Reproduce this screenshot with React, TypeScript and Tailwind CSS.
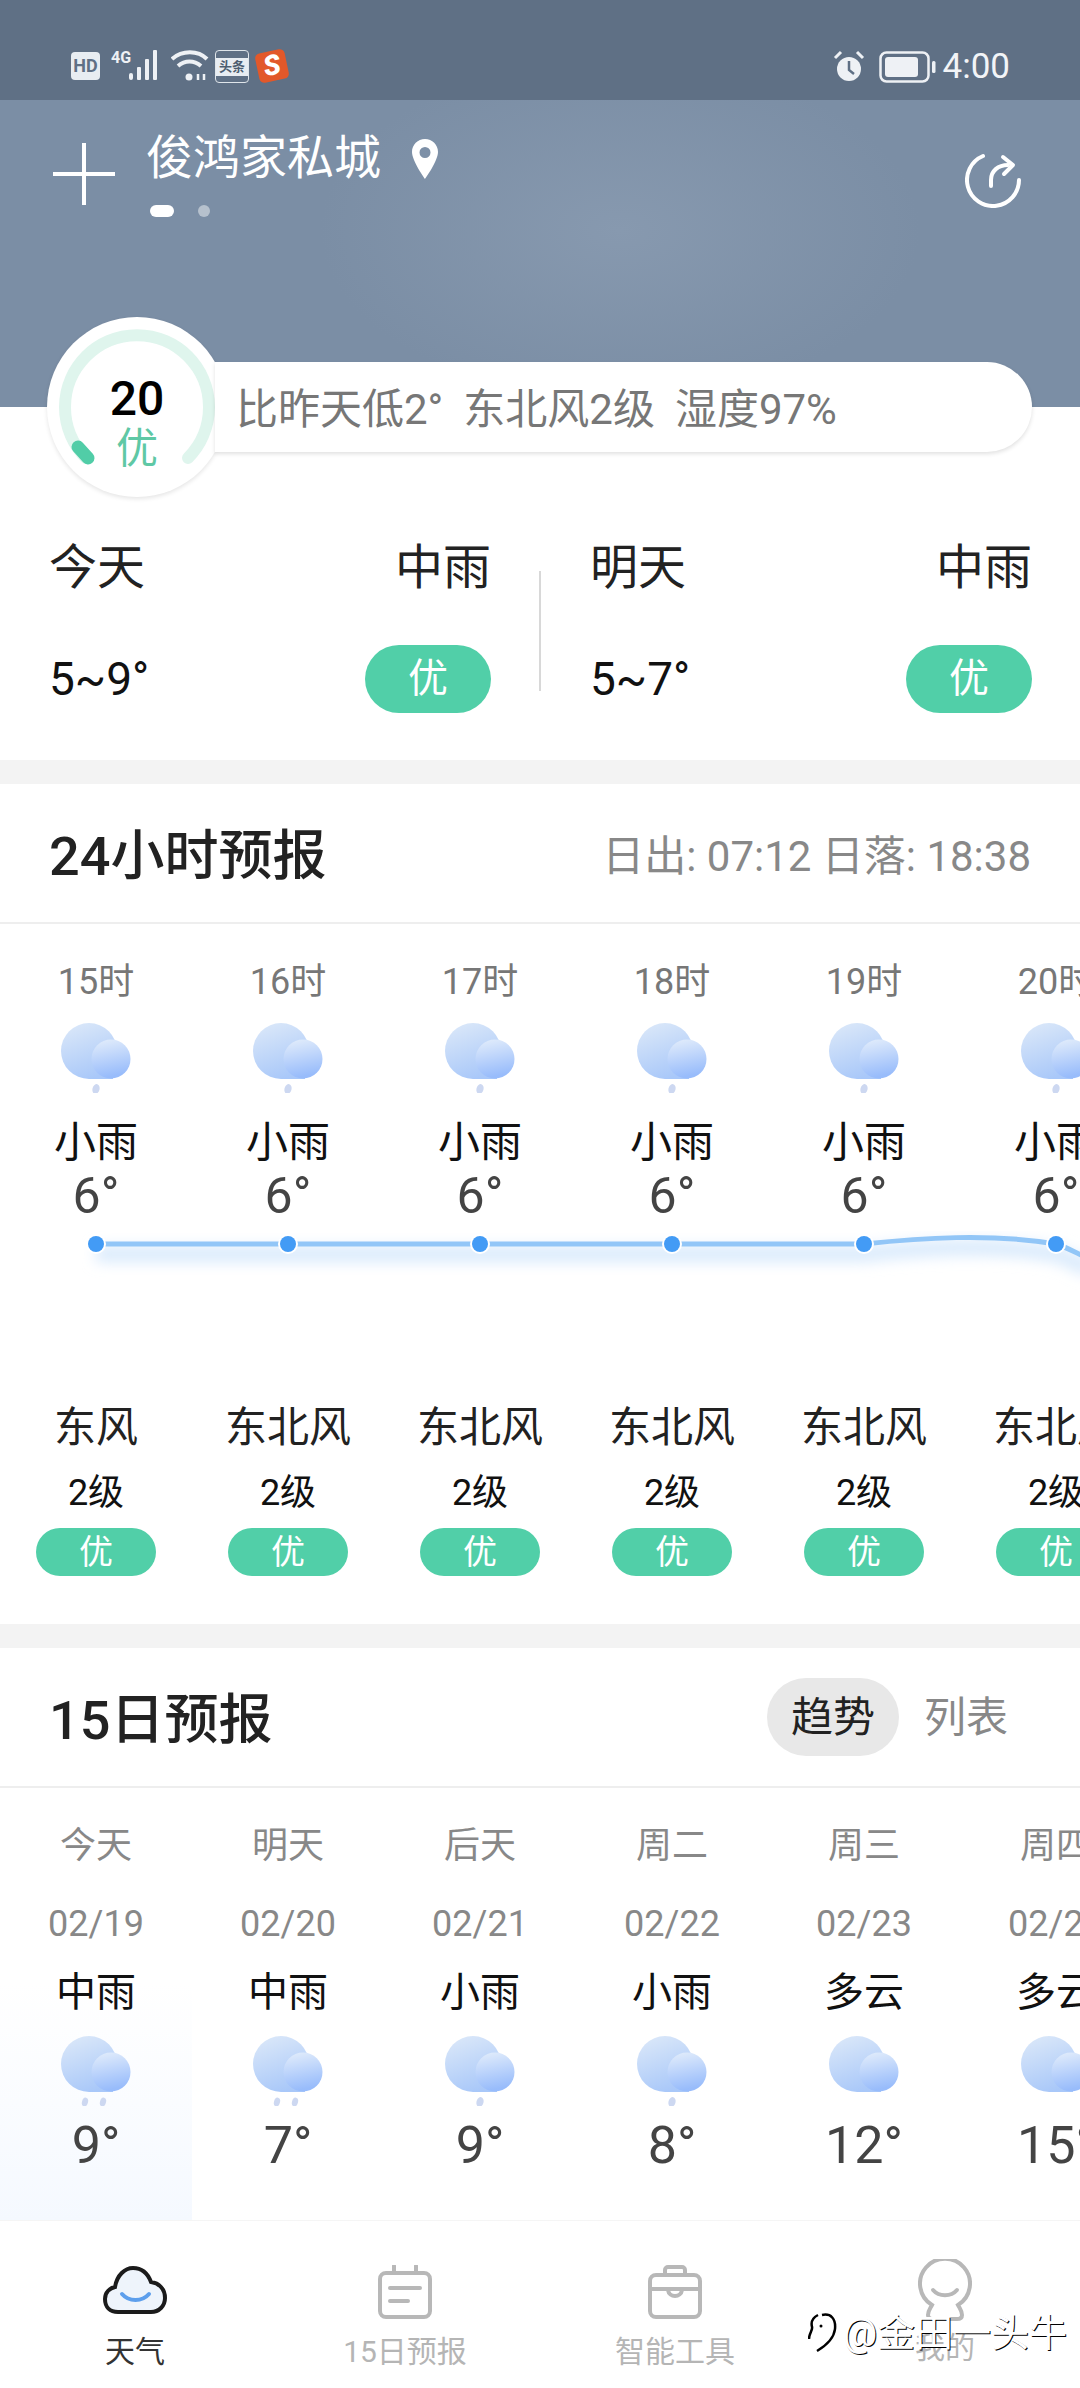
const hours = ["15时", "16时", "17时", "18时", "19时", "20时"];
const days = [
  { week: "今天", date: "02/19", cond: "中雨", temp: 9, drops: 2 },
  { week: "明天", date: "02/20", cond: "中雨", temp: 7, drops: 2 },
  { week: "后天", date: "02/21", cond: "小雨", temp: 9, drops: 1 },
  { week: "周二", date: "02/22", cond: "小雨", temp: 8, drops: 1 },
  { week: "周三", date: "02/23", cond: "多云", temp: 12, drops: 0 },
  { week: "周四", date: "02/24", cond: "多云", temp: 15, drops: 0 },
];

function CloudIcon({ drops }: { drops: number }) {
  return (
    <svg width="70" height="70" viewBox="0 0 70 70" className="shrink-0">
      <defs>
        <linearGradient id="cloudBack" gradientUnits="userSpaceOnUse" x1="10" y1="0" x2="30" y2="56">
          <stop offset="0" stopColor="#dbe8f9" />
          <stop offset="1" stopColor="#a9c8f9" />
        </linearGradient>
        <linearGradient id="cloudFront" x1="0" y1="0" x2="0.2" y2="1">
          <stop offset="0" stopColor="#e4eefb" />
          <stop offset="1" stopColor="#98bcfb" />
        </linearGradient>
      </defs>
      <circle cx="28" cy="28" r="28" fill="url(#cloudBack)" />
      <rect x="28" y="44" width="24" height="12" fill="url(#cloudBack)" />
      <circle cx="50" cy="36" r="19.500" fill="url(#cloudFront)" />
      {drops === 1 && <ellipse cx="35" cy="66" rx="3.500" ry="5" fill="#cdd8f1" transform="rotate(15 35 66)" />}
      {drops === 2 && (
        <>
          <ellipse cx="24" cy="66" rx="3" ry="4.500" fill="#cdd8f1" transform="rotate(15 24 66)" />
          <ellipse cx="42" cy="66" rx="3" ry="4.500" fill="#cdd8f1" transform="rotate(15 42 66)" />
        </>
      )}
    </svg>
  );
}

function StatusBar() {
  return (
    <div className="flex h-[100px] items-start justify-between bg-[#5f7085] pl-[71px] pr-[70px] pt-[50px]">
      <div className="flex items-start">
        <div className="mt-[2px] flex h-[28px] w-[29px] items-center justify-center rounded-[4px] bg-[#e8edf2] text-[18px] font-bold leading-none text-[#5f7085]">
          HD
        </div>
        <div className="ml-[11px] w-[18px] text-[16px] font-bold leading-[16px] text-[#eef1f5]">4G</div>
        <svg width="34" height="30" viewBox="0 0 34 30" className="-ml-[1px]" fill="#eef1f5">
          <rect x="1" y="23" width="4" height="7" rx="2" />
          <rect x="9" y="17" width="4" height="13" rx="1" />
          <rect x="17" y="9" width="4" height="21" rx="1" />
          <rect x="25" y="0" width="4" height="30" rx="1" />
        </svg>
        <svg width="38" height="32" viewBox="0 0 38 32" className="ml-[9px]" fill="none" stroke="#eef1f5" strokeWidth="4">
          <path d="M1 9c10-9 26-9 35 0" />
          <path d="M7 16c7-6 16-6 23 0" />
          <circle cx="18" cy="27" r="3.500" fill="#eef1f5" stroke="none" />
          <path d="M27 24v6M33 24v6" strokeWidth="2.500" />
        </svg>
        <div className="ml-[6px] flex h-[33px] w-[34px] items-center justify-center rounded-[4px] border border-[#dfe5ea]">
          <span className="w-full bg-[#e8edf2] text-center text-[13px] font-bold leading-[18px] text-[#4d5d70]">头条</span>
        </div>
        <div className="ml-[8px] mt-[1px] flex h-[30px] w-[30px] rotate-[-12deg] items-center justify-center rounded-[5px] bg-[#e2582a] text-[28px] font-black italic leading-none text-white">
          S
        </div>
      </div>
      <div className="flex items-center">
        <svg width="32" height="34" viewBox="0 0 32 34" fill="none">
          <path d="M2 8l6-6M30 8l-6-6" stroke="#eef1f5" strokeWidth="3" />
          <circle cx="16" cy="19" r="12" fill="#eef1f5" />
          <path d="M16 11v9l5 4" stroke="#5f7085" strokeWidth="2.500" />
        </svg>
        <svg width="58" height="32" viewBox="0 0 58 32" className="ml-[14px]" fill="none">
          <rect x="1.500" y="1.500" width="48" height="29" rx="6" stroke="#eef1f5" strokeWidth="2.500" />
          <rect x="6" y="6" width="33" height="20" rx="3" fill="#eef1f5" />
          <rect x="53" y="10" width="3.500" height="12" rx="1.500" fill="#eef1f5" />
        </svg>
        <span className="ml-[6px] text-[35px] leading-[34px] text-[#f2f4f7]">4:00</span>
      </div>
    </div>
  );
}

function Hero() {
  return (
    <div className="flex h-[307px] items-start justify-between bg-[#7b8ea5] bg-[radial-gradient(ellipse_300px_170px_at_620px_130px,#8799af_0%,#7b8ea5_100%)] pl-[53px] pr-[59px]">
      <div className="flex items-start">
        <svg width="62" height="62" viewBox="0 0 62 62" className="mt-[43px]" stroke="#fff" strokeWidth="4">
          <path d="M31 0v62M0 31h62" />
        </svg>
        <div className="ml-[31px] mt-[30px]">
          <div className="flex items-start">
            <span className="text-[47px] leading-[56px] text-white">俊鸿家私城</span>
            <svg width="26" height="40" viewBox="0 0 26 40" className="ml-[31px] mt-[9px]">
              <path
                fillRule="evenodd"
                d="M13 0C5.800 0 0 5.800 0 13c0 9 13 27 13 27s13-18 13-27C26 5.800 20.200 0 13 0zm0 8a5.500 5.500 0 1 1 0 11 5.500 5.500 0 0 1 0-11z"
                fill="#fff"
              />
            </svg>
          </div>
          <div className="ml-[4px] mt-[19px] flex items-center gap-[24px]">
            <div className="h-[12px] w-[24px] rounded-full bg-white" />
            <div className="h-[12px] w-[12px] rounded-full bg-[#b6c1cd]" />
          </div>
        </div>
      </div>
      <svg width="56" height="58" viewBox="0 0 56 58" className="mt-[50px]" fill="none" stroke="#fff" strokeWidth="4" strokeLinecap="round">
        <path d="M18 6a26 26 0 1 0 36 24" />
        <path d="M26 36v-6c0-9 7-15 17-15" />
        <path d="M38 7l10 8-9 9" strokeLinejoin="round" />
      </svg>
    </div>
  );
}

function AqiGauge() {
  return (
    <div className="relative z-10 flex h-[180px] w-[180px] shrink-0 flex-col items-center rounded-full bg-white shadow-[0_2px_4px_rgba(0,0,0,0.1)]">
      <svg width="180" height="180" viewBox="0 0 180 180" className="absolute left-0 top-0" fill="none" strokeLinecap="round">
        <path d="M39 141A72 72 0 1 1 141 141" stroke="#dff5ed" strokeWidth="12" />
        <path d="M31 130L41 141" stroke="#51cda7" strokeWidth="13" />
      </svg>
      <span className="relative mt-[55px] text-[48px] font-medium leading-[54px] text-black">20</span>
      <span className="relative text-[42px] leading-[46px] text-[#5fc8a5]">优</span>
    </div>
  );
}

function TodayCard({ day, cond, temp }: { day: string; cond: string; temp: string }) {
  return (
    <div className="flex w-[442px] flex-col">
      <div className="flex items-center justify-between text-[48px] leading-[60px] text-[#222]">
        <span>{day}</span>
        <span>{cond}</span>
      </div>
      <div className="mt-[47px] flex items-center justify-between">
        <span className="text-[46px] leading-[60px] text-[#111]">{temp}</span>
        <span className="flex h-[68px] w-[126px] items-center justify-center rounded-full bg-[#51cfa8] text-[40px] text-white">优</span>
      </div>
    </div>
  );
}

function HourlyCurve() {
  const line = "M96 23H864C920 17 990 12 1056 23C1066 26 1072 30 1090 38";
  return (
    <svg width="1152" height="80" viewBox="0 0 1152 80" className="block">
      <defs>
        <filter id="curveBlur" filterUnits="userSpaceOnUse" x="40" y="0" width="1112" height="80">
          <feGaussianBlur stdDeviation="7" />
        </filter>
      </defs>
      <path d={line} transform="translate(0,10)" fill="none" stroke="#d9eafc" strokeWidth="16" filter="url(#curveBlur)" />
      <path d={line} fill="none" stroke="#92c6f7" strokeWidth="5" />
      {[96, 288, 480, 672, 864, 1056].map((x) => (
        <circle key={x} cx={x} cy="23" r="8" fill="#439bf5" stroke="#fff" strokeWidth="4" paintOrder="stroke" />
      ))}
    </svg>
  );
}

function HourlyForecast() {
  return (
    <div className="overflow-hidden pb-[48px]">
      <div className="flex w-[1152px]">
        {hours.map((hour) => (
          <div key={hour} className="flex w-[192px] shrink-0 flex-col items-center pt-[38px]">
            <span className="text-[36px] leading-[40px] text-[#777]">{hour}</span>
            <div className="mt-[21px]">
              <CloudIcon drops={1} />
            </div>
            <span className="mt-[25px] text-[42px] leading-[50px] text-[#111]">小雨</span>
            <span className="mt-[3px] text-[50px] leading-[50px] text-[#444]">6°</span>
          </div>
        ))}
      </div>
      <HourlyCurve />
      <div className="flex w-[1152px]">
        {hours.map((hour, i) => (
          <div key={hour} className="flex w-[192px] shrink-0 flex-col items-center">
            <span className="mt-[102px] whitespace-nowrap text-[42px] leading-[50px] text-[#222]">{i === 0 ? "东风" : "东北风"}</span>
            <span className="mt-[20px] text-[36px] leading-[40px] text-[#111]">2级</span>
            <span className="mt-[15px] flex h-[48px] w-[120px] items-center justify-center rounded-full bg-[#51cfa8] text-[34px] text-white">优</span>
          </div>
        ))}
      </div>
    </div>
  );
}

function DailyForecast() {
  return (
    <div className="flex w-[1152px]">
      {days.map((d, i) => (
        <div
          key={d.date}
          className={`flex w-[192px] shrink-0 flex-col items-center pb-[45px] pt-[38px] ${
            i === 0 ? "bg-linear-to-b from-white from-[45%] to-[#f5f9ff]" : ""
          }`}
        >
          <span className="text-[36px] leading-[40px] text-[#888]">{d.week}</span>
          <span className="mt-[38px] text-[36px] leading-[40px] text-[#888]">{d.date}</span>
          <span className="mt-[24px] text-[40px] leading-[50px] text-[#111]">{d.cond}</span>
          <div className="mt-[18px]">
            <CloudIcon drops={d.drops} />
          </div>
          <span className="mt-[10px] text-[52px] leading-[60px] text-[#444]">{d.temp}°</span>
        </div>
      ))}
    </div>
  );
}

function BottomNav() {
  return (
    <div className="relative grid h-[168px] grid-cols-4 border-t border-[#f5f5f5] bg-white">
      <div className="flex flex-col items-center pt-[44px]">
        <svg width="64" height="50" viewBox="0 0 64 50" className="h-[50px]" fill="none">
          <path
            d="M15 47C7 47 2 42 2 34c0-7 5-11 10-12C14 10 22 3 30 3c9 0 15 6 18 14 8 1 14 7 14 16 0 8-6 14-14 14z"
            fill="#eef4fb"
            stroke="#1b1b1b"
            strokeWidth="4"
          />
          <path d="M19 29c7 8 20 8 27 0" stroke="#5d9fec" strokeWidth="4" strokeLinecap="round" />
        </svg>
        <span className="mt-[19px] text-[30px] leading-[36px] text-[#333]">天气</span>
      </div>
      <div className="flex flex-col items-center pt-[44px]">
        <svg width="54" height="54" viewBox="0 0 54 54" fill="none" stroke="#b8b8b8" strokeWidth="4" strokeLinecap="round">
          <rect x="2" y="8" width="50" height="44" rx="6" />
          <path d="M16 1v7M38 1v7M12 23h30M12 36h18" />
        </svg>
        <span className="mt-[15px] text-[30px] leading-[36px] text-[#b5b5b5]">15日预报</span>
      </div>
      <div className="flex flex-col items-center pt-[44px]">
        <svg width="54" height="54" viewBox="0 0 54 54" fill="none" stroke="#b8b8b8" strokeWidth="4" strokeLinecap="round">
          <rect x="2" y="10" width="50" height="42" rx="6" />
          <path d="M17 10V5a3 3 0 0 1 3-3h14a3 3 0 0 1 3 3v5M2 24h50M20 25c1 8 13 8 14 0" />
        </svg>
        <span className="mt-[15px] text-[30px] leading-[36px] text-[#b5b5b5]">智能工具</span>
      </div>
      <div className="flex flex-col items-center pt-[38px]">
        <svg width="54" height="64" viewBox="0 0 54 64" fill="none" stroke="#b8b8b8" strokeWidth="4" strokeLinecap="round">
          <path d="M14 46a25 25 0 1 1 26 0c2 4 4 6 4 10 0 3-2 4-5 4H15c-3 0-5-1-5-4 0-4 2-6 4-10z" />
          <path d="M15 31c6 7 18 7 24 0" />
        </svg>
        <span className="mt-[7px] text-[30px] leading-[36px] text-[#b5b5b5]">我的</span>
      </div>
      {/* watermark sits on top of the tab bar */}
      <div className="absolute left-[808px] top-[90px] flex items-center">
        <svg width="30" height="40" viewBox="0 0 30 40" fill="none" stroke="#000" strokeWidth="2.500">
          <path d="M10 2C4 5 3 10 4 14c1 3-3 6-3 12M14 2c9-2 14 4 13 14-1 9-8 16-18 22" />
          <circle cx="13" cy="13" r="1.500" fill="#000" stroke="none" />
        </svg>
        <span className="ml-[5px] whitespace-nowrap text-[38px] leading-[44px] text-white [text-shadow:1px_1px_0_#000]">@金田一头牛</span>
      </div>
    </div>
  );
}

export default function App() {
  return (
    <div className="flex h-[2388px] w-[1080px] flex-col overflow-hidden bg-white font-['Roboto','Noto_Sans_CJK_SC',sans-serif]">
      <StatusBar />
      <Hero />

      {/* AQI gauge and summary pill */}
      <div className="-mt-[90px] flex items-center pl-[47px]">
        <AqiGauge />
        <div className="relative z-20 -ml-[12px] flex h-[90px] w-[817px] items-center rounded-r-full bg-white pl-[21px] pt-[4px] text-[42px] text-[#777] shadow-[0_2px_4px_rgba(0,0,0,0.12)]">
          <span>比昨天低2°</span>
          <span className="ml-[20px]">东北风2级</span>
          <span className="ml-[20px]">湿度97%</span>
        </div>
      </div>

      {/* Today / tomorrow */}
      <div className="flex h-[263px] items-start pl-[49px] pt-[41px]">
        <TodayCard day="今天" cond="中雨" temp="5~9°" />
        <div className="ml-[48px] mr-[49px] mt-[33px] h-[120px] w-[2px] bg-[#d8d8d8]" />
        <TodayCard day="明天" cond="中雨" temp="5~7°" />
      </div>
      <div className="h-[24px] bg-[#f3f3f3]" />

      {/* 24 hours */}
      <div className="flex h-[140px] items-center justify-between border-b-2 border-[#eeeeee] px-[49px]">
        <span className="mt-[6px] text-[54px] font-medium text-[#222]">24小时预报</span>
        <span className="mt-[6px] text-[42px] text-[#888]">日出: 07:12 日落: 18:38</span>
      </div>
      <HourlyForecast />
      <div className="h-[24px] bg-[#f3f3f3]" />

      {/* 15 days */}
      <div className="flex h-[140px] items-center justify-between border-b-2 border-[#eeeeee] pl-[49px] pr-[72px]">
        <span className="mt-[6px] text-[54px] font-medium text-[#222]">15日预报</span>
        <div className="flex items-center">
          <span className="flex h-[78px] w-[132px] items-center justify-center rounded-full bg-[#e8e8e8] text-[42px] text-[#222]">趋势</span>
          <span className="ml-[25px] text-[42px] text-[#888]">列表</span>
        </div>
      </div>
      <div className="flex-1 overflow-hidden">
        <DailyForecast />
      </div>
      <BottomNav />
    </div>
  );
}
